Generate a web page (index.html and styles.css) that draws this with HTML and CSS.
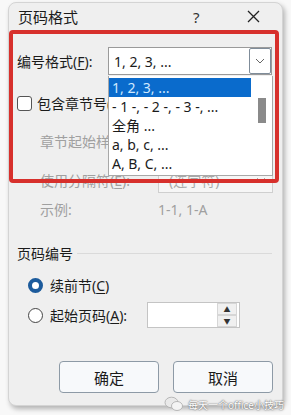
FILE: index.html
```html
<!DOCTYPE html>
<html lang="zh-CN">
  <head>
    <meta charset="UTF-8" />
    <meta name="viewport" content="width=device-width, initial-scale=1.0" />
    <title>页码格式</title>
    <link rel="stylesheet" href="styles.css">
  </head>
  <body>
    <div class="dialog">
      <div class="titlebar">
        <span class="title">页码格式</span>
        <span class="help">?</span>
        <span class="close">
          <svg width="13" height="13" viewBox="0 0 13 13"><path d="M1 1 L12 12 M12 1 L1 12" stroke="#222" stroke-width="1.3" fill="none"/></svg>
        </span>
      </div>

      <div class="row row-format">
        <label class="label">编号格式(<u>F</u>):</label>
        <div class="select">
          <span class="select-text">1, 2, 3, ...</span>
          <span class="select-btn">
            <svg width="10" height="6" viewBox="0 0 10 6"><path d="M1 1 L5 5 L9 1" stroke="#666" stroke-width="1" fill="none"/></svg>
          </span>
        </div>
      </div>

      <div class="row row-check">
        <span class="checkbox"></span>
        <span>包含章节号(<u>N</u>)</span>
      </div>

      <div class="row row-sub muted">章节起始样式(<u>P</u>):</div>

      <div class="row row-sep">
        <span class="sub-label muted">使用分隔符(<u>E</u>):</span>
        <div class="select select-off">
          <span class="select-text">(连字符)</span>
          <span class="select-arrow">
            <svg width="10" height="6" viewBox="0 0 10 6"><path d="M1 1 L5 5 L9 1" stroke="#aaa" stroke-width="1" fill="none"/></svg>
          </span>
        </div>
      </div>

      <div class="row row-example muted">
        <span class="sub-label">示例:</span>
        <span>1-1, 1-A</span>
      </div>

      <div class="row section">
        <span>页码编号</span>
        <span class="rule"></span>
      </div>

      <div class="row row-radio">
        <span class="radio on"></span>
        <span>续前节(<u>C</u>)</span>
      </div>

      <div class="row row-radio row-start">
        <span class="radio"></span>
        <span class="start-label">起始页码(<u>A</u>):</span>
        <div class="spin">
          <span class="spin-field"></span>
          <span class="spin-btns">
            <span class="spin-btn">▲</span>
            <span class="spin-btn">▼</span>
          </span>
        </div>
      </div>

      <div class="row buttons">
        <button class="btn">确定</button>
        <button class="btn">取消</button>
      </div>

      <!-- open dropdown list, drawn over the rows below it -->
      <div class="droplist">
        <div class="items">
          <div class="item selected">1, 2, 3, ...</div>
          <div class="item">- 1 -, - 2 -, - 3 -, ...</div>
          <div class="item">全角 ...</div>
          <div class="item">a, b, c, ...</div>
          <div class="item">A, B, C, ...</div>
        </div>
        <div class="scroll"><span class="thumb"></span></div>
      </div>

      <div class="highlight"></div>
    </div>

    <div class="watermark">
      <svg width="20" height="16" viewBox="0 0 20 16">
        <ellipse cx="7.5" cy="6.5" rx="6.5" ry="5.3" fill="#e9e9e9" stroke="#aaa" stroke-width="0.8"/>
        <ellipse cx="13" cy="10" rx="5.5" ry="4.5" fill="#f4f4f4" stroke="#aaa" stroke-width="0.8"/>
      </svg>
      <span>每天一个office小技巧</span>
    </div>
  </body>
</html>
```

FILE: styles.css
```css
body {
  margin: 0;
  width: 291px;
  height: 415px;
  overflow: hidden;
  background: #f8f8f8;
  font-family: 'Noto Sans', 'Noto Sans CJK SC', sans-serif;
  font-size: 14px;
  color: #1b1b1b;
  position: relative;
}

u {
  text-decoration: underline;
  text-underline-offset: 2px;
}

.dialog {
  position: relative;
  box-sizing: border-box;
  margin: 2px 0 0 8px;
  width: 275px;
  height: 404px;
  background: #efefef;
  border: 1px solid #d4d4d4;
  border-radius: 8px;
  box-shadow: 2px 3px 5px rgba(0, 0, 0, 0.28);
}

.titlebar {
  display: flex;
  align-items: center;
  height: 27px;
  padding-left: 9px;
}

.title {
  font-size: 15px;
  flex: 1;
}

.help {
  font-size: 15px;
  color: #333;
  width: 54px;
}

.close {
  display: flex;
  width: 35px;
}

.row {
  display: flex;
  align-items: center;
  padding-left: 8px;
}

.row-format {
  margin-top: 17px;
  height: 28px;
}

.label {
  width: 91px;
}

.select {
  box-sizing: border-box;
  display: flex;
  align-items: center;
  width: 164px;
  height: 28px;
  background: #fff;
  border: 1px solid #9a9a9a;
}

.select-text {
  flex: 1;
  padding-left: 5px;
}

.select-btn {
  box-sizing: border-box;
  display: flex;
  align-items: center;
  justify-content: center;
  width: 22px;
  height: 26px;
  border: 1px solid #7f8c99;
  border-radius: 2px;
}

.row-check {
  margin-top: 18px;
  height: 20px;
  gap: 5px;
}

.checkbox {
  box-sizing: border-box;
  width: 15px;
  height: 15px;
  background: #fff;
  border: 1px solid #555;
  border-radius: 3px;
}

.muted {
  color: #a0a0a0;
}

.row-sub {
  margin-top: 18px;
  height: 20px;
  padding-left: 31px;
}

.row-sep {
  margin-top: 16px;
  height: 26px;
  padding-left: 31px;
}

.sub-label {
  width: 118px;
}

.select-off {
  width: 115px;
  height: 26px;
  background: #f6f6f6;
  border-color: #cfcfcf;
  color: #a9a9a9;
}

.select-off .select-text {
  padding-left: 10px;
}

.select-arrow {
  width: 22px;
  display: flex;
  justify-content: center;
}

.row-example {
  margin-top: 6px;
  height: 20px;
  padding-left: 31px;
}

.section {
  margin-top: 24px;
  height: 20px;
  gap: 4px;
}

.rule {
  flex: 1;
  height: 1px;
  margin-right: 10px;
  background: #dadada;
}

.row-radio {
  margin-top: 12px;
  height: 20px;
  padding-left: 19px;
  gap: 7px;
}

.radio {
  box-sizing: border-box;
  width: 15px;
  height: 15px;
  border-radius: 50%;
  border: 1px solid #444;
  background: #fff;
}

.radio.on {
  border: 4.5px solid #1c5b9c;
  background: #fff;
}

.row-start {
  margin-top: 7px;
  height: 26px;
}

.start-label {
  width: 90px;
}

.spin {
  box-sizing: border-box;
  display: flex;
  width: 93px;
  height: 26px;
  background: #fff;
  border: 1px solid #c4c4c4;
}

.spin-field {
  flex: 1;
}

.spin-btns {
  display: flex;
  flex-direction: column;
  width: 20px;
  margin-right: 2px;
}

.spin-btn {
  flex: 1;
  display: flex;
  align-items: center;
  justify-content: center;
  font-size: 7px;
  color: #333;
  background: #f0f0f0;
  border: 1px solid #d6d6d6;
}

.buttons {
  margin-top: 33px;
  padding-left: 50px;
  gap: 14px;
}

.btn {
  box-sizing: border-box;
  width: 100px;
  height: 32px;
  font-family: inherit;
  font-size: 15px;
  color: #1b1b1b;
  background: #f7f9fb;
  border: 1px solid #8d9aa6;
  border-radius: 4px;
}

.droplist {
  position: absolute;
  left: 99px;
  top: 73px;
  box-sizing: border-box;
  display: flex;
  width: 165px;
  height: 100px;
  background: #fff;
  border: 1px solid #a8a8a8;
  border-top: none;
}

.items {
  flex: 1;
  padding-top: 2px;
}

.item {
  height: 19px;
  line-height: 19px;
  padding-left: 3px;
  white-space: nowrap;
}

.item.selected {
  background: #0a6bcc;
  color: #cfe9ff;
}

.scroll {
  width: 21px;
  padding-top: 22px;
  display: flex;
  justify-content: center;
}

.thumb {
  width: 8px;
  height: 25px;
  background: #8a8a8a;
}

.highlight {
  position: absolute;
  left: 0;
  top: 27px;
  box-sizing: border-box;
  width: 270px;
  height: 153px;
  border: 4px solid #d7302c;
  border-radius: 4px;
}

.watermark {
  position: absolute;
  left: 164px;
  top: 396px;
  display: flex;
  align-items: center;
  gap: 4px;
  font-size: 10px;
  color: #fff;
  text-shadow: 0 0 2px #777, 0 0 1px #555;
}
```
